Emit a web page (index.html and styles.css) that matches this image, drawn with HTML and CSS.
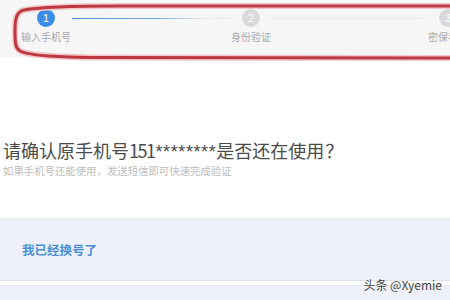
FILE: index.html
```html
<!DOCTYPE html>
<html lang="zh-CN">
<head>
<meta charset="utf-8">
<title>验证</title>
<link rel="stylesheet" href="styles.css">
</head>
<body>
<div class="page">
  <div class="steps">
    <div class="step step-1">
      <div class="dot dot-active">1</div>
      <div class="label">输入手机号</div>
    </div>
    <div class="connector connector-1"></div>
    <div class="step step-2">
      <div class="dot">2</div>
      <div class="label">身份验证</div>
    </div>
    <div class="connector connector-2"></div>
    <div class="step step-3">
      <div class="dot">3</div>
      <div class="label">密保手机</div>
    </div>
  </div>

  <div class="content">
    <h1 class="title">请确认原手机号<span class="digits">151</span><span class="stars">********</span>是否还在使用<span class="qmark">？</span></h1>
    <p class="subtitle">如果手机号还能使用，发送短信即可快速完成验证</p>
  </div>

  <div class="option option-main">我已经换号了</div>
  <div class="option option-next"></div>

  <svg class="annotation" width="450" height="66" viewBox="0 0 450 66">
    <path d="M452 6 L120 6 C70 6 40 7 24 10 C16 12 15 20 15 30 C15 42 15 48 20 51 C30 56 60 57 100 57.5 L452 58" fill="none" stroke="#f3c7ca" stroke-width="6" stroke-linecap="round"/>
    <path d="M452 6 L120 6 C70 6 40 7 24 10 C16 12 15 20 15 30 C15 42 15 48 20 51 C30 56 60 57 100 57.5 L452 58" fill="none" stroke="#bd3840" stroke-width="3" stroke-linecap="round"/>
  </svg>

  <div class="watermark">头条 @Xyemie</div>
</div>
</body>
</html>
```

FILE: styles.css
```css
html, body {
  margin: 0;
  padding: 0;
  background: #ffffff;
}

body {
  width: 450px;
  height: 300px;
  overflow: hidden;
  font-family: "Noto Sans CJK SC", "Noto Sans", "Liberation Sans", sans-serif;
}

.page {
  position: relative;
  width: 450px;
  height: 300px;
  overflow: hidden;
}

.steps {
  display: flex;
  align-items: flex-start;
  height: 58px;
  padding: 9px 0 0 20px;
  box-sizing: border-box;
  background: #f6f6f7;
  overflow: hidden;
}

.step {
  flex: 0 0 auto;
  display: flex;
  flex-direction: column;
  align-items: center;
}

.step-1 { width: 52px; }
.step-2 { width: 40px; }
.step-3 { width: 40px; }

.dot {
  width: 18px;
  height: 18px;
  border-radius: 50%;
  background: #d9d9db;
  color: #ffffff;
  font-family: "Liberation Sans", sans-serif;
  font-size: 11px;
  line-height: 18px;
  text-align: center;
}

.dot-active {
  background: #3b8de6;
}

.label {
  margin-top: 4px;
  font-size: 10px;
  line-height: 12px;
  color: #a9a9a9;
  white-space: nowrap;
}

.connector {
  flex: 0 0 auto;
  height: 1px;
  margin-top: 9px;
  background: #e8e9eb;
}

.connector-1 {
  width: 159px;
  background: linear-gradient(to right, #4a8fd8 0%, #7aa9d9 55%, #dfe8f1 80%, #e8e9eb 100%);
}

.connector-2 {
  width: 157px;
  background: linear-gradient(to right, #e8e9eb 0%, #e8e9eb 94%, rgba(232, 233, 235, 0) 100%);
}

.content {
  padding: 80px 0 0 3px;
}

.title {
  margin: 0;
  font-size: 18px;
  line-height: 24px;
  font-weight: normal;
  color: #4b4b4b;
  letter-spacing: 0;
  white-space: nowrap;
}

.digits {
  letter-spacing: -1.5px;
  margin-right: 1px;
}

.stars {
  font-family: "Liberation Sans", sans-serif;
  font-size: 18px;
  letter-spacing: 0.6px;
}

.qmark {
  margin-left: 1px;
}

.subtitle {
  margin: 0;
  font-size: 10.4px;
  line-height: 14px;
  color: #bdbdbd;
  white-space: nowrap;
}

.option {
  background: #eef1f9;
  box-sizing: border-box;
}

.option-main {
  margin-top: 40px;
  height: 63px;
  padding: 23px 0 0 22px;
  border-top: 1px solid #e7eaf2;
  border-bottom: 1px solid #dfe2e8;
  font-size: 12.5px;
  line-height: 16px;
  font-weight: bold;
  color: #4a8ed4;
}

.option-next {
  margin-top: 4px;
  height: 20px;
  border-top: 1px solid #e2e5ec;
}

.annotation {
  position: absolute;
  left: 0;
  top: 0;
}

.watermark {
  position: absolute;
  right: 8px;
  top: 277px;
  font-family: "Noto Sans CJK SC", "Liberation Sans", sans-serif;
  font-size: 12px;
  line-height: 16px;
  color: #3f3f3f;
  text-shadow: 0 0 2px #ffffff;
}
```
